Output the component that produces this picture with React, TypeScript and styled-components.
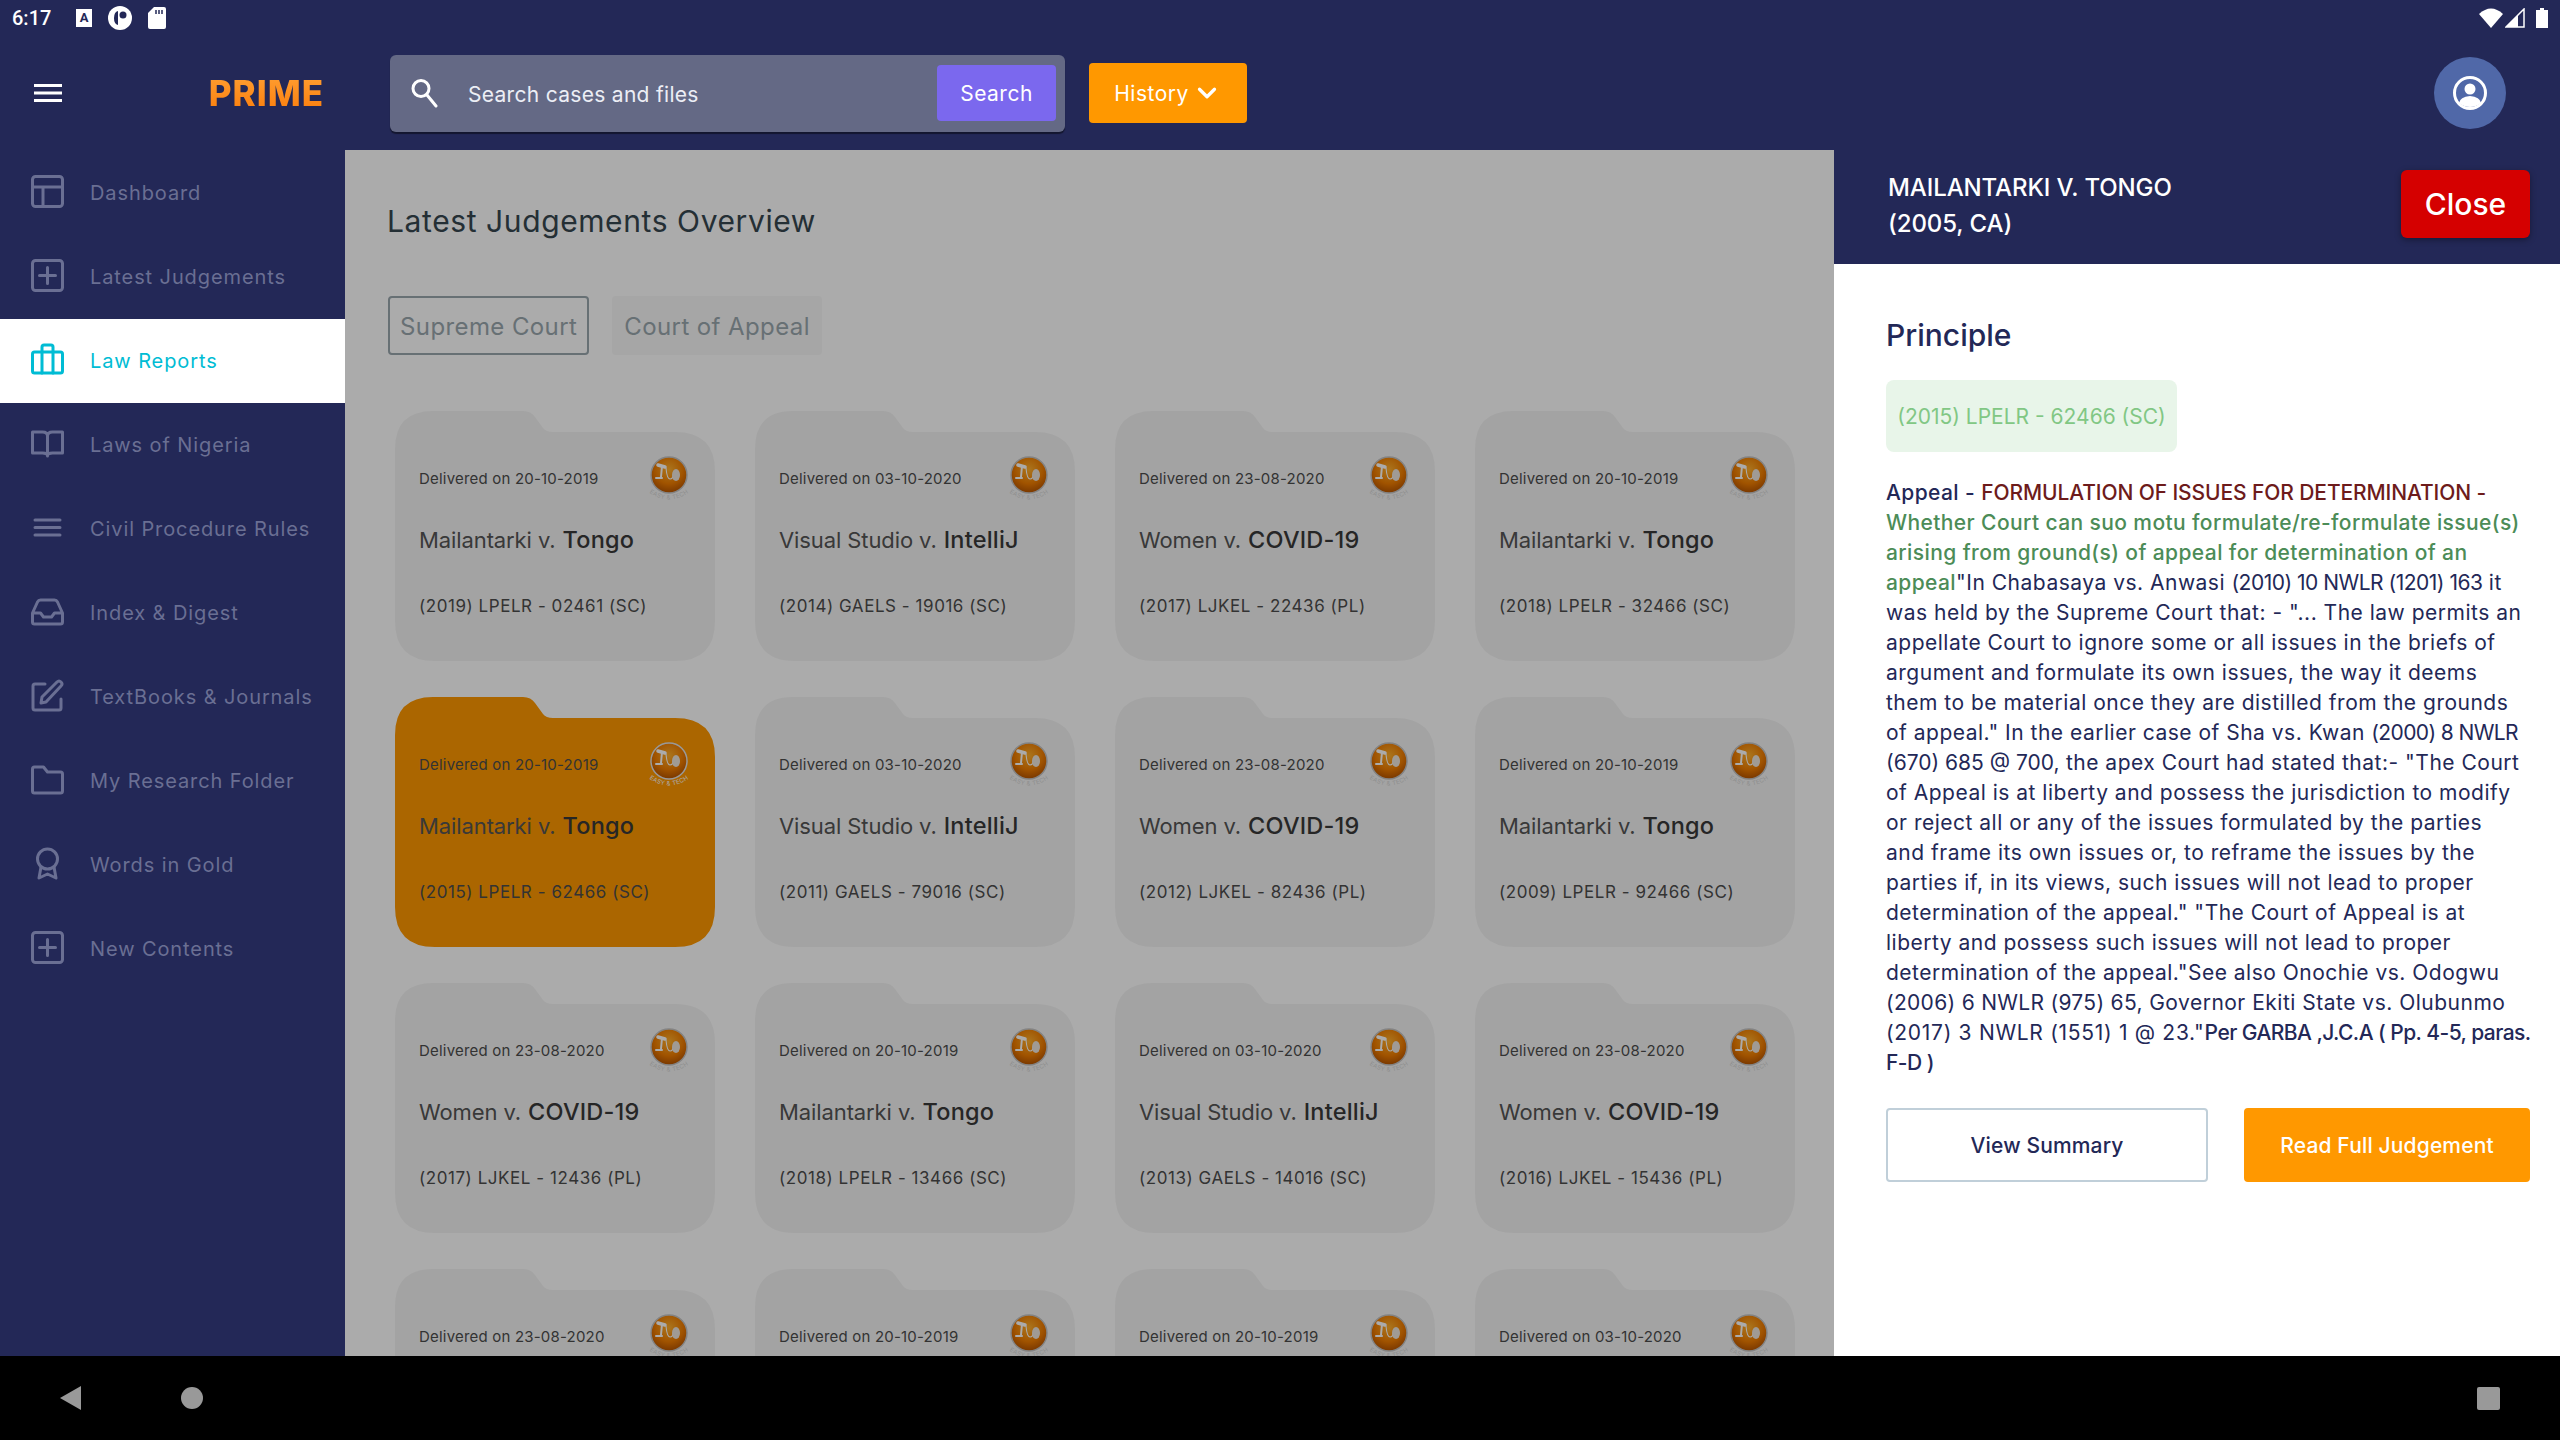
import * as React from "react";
import styled, { createGlobalStyle } from "styled-components";
import { ChevronDown } from "lucide-react";

const navy = "#232857";
const orange = "#ff9800";

const GlobalStyle = createGlobalStyle`
  html, body { margin: 0; padding: 0; background: #000; }
  * { box-sizing: border-box; }
  body { font-family: Inter, "Open Sans", sans-serif; }
`;

const Page = styled.div`
  width: 2560px;
  height: 1440px;
  display: flex;
  flex-direction: column;
  overflow: hidden;
  background: ${navy};
`;

/* status bar */
const StatusBar = styled.div`
  height: 36px;
  display: flex;
  align-items: center;
  padding: 0 12px;
  color: #fff;
`;

const Clock = styled.span`
  font-family: Roboto, sans-serif;
  font-size: 20px;
  font-weight: 500;
  width: 64px;
`;

const StatusLeft = styled.div`
  display: flex;
  align-items: center;
  gap: 16px;
`;

const KeyboardBox = styled.span`
  width: 16px;
  height: 18px;
  background: #fff;
  color: ${navy};
  font-family: Roboto, sans-serif;
  font-size: 13px;
  font-weight: 700;
  line-height: 18px;
  text-align: center;
`;

const StatusRight = styled.div`
  margin-left: auto;
  display: flex;
  align-items: center;
  gap: 2px;
`;

const BatteryIcon = styled.svg`
  margin-left: 9px;
`;

/* top bar */
const TopBar = styled.header`
  height: 114px;
  display: flex;
  align-items: center;
  padding-right: 54px;
`;

const BrandCell = styled.div`
  width: 390px;
  padding: 0 66px 0 34px;
  display: flex;
  align-items: center;
  justify-content: space-between;
`;

const Brand = styled.span`
  font-size: 35px;
  font-weight: 800;
  line-height: 40px;
  letter-spacing: 1px;
  background: linear-gradient(180deg, #ffa033, #fb7d0c);
  -webkit-background-clip: text;
  background-clip: text;
  color: transparent;
`;

const SearchBox = styled.div`
  width: 675px;
  height: 77px;
  border-radius: 6px;
  background: #646985;
  box-shadow: 0 2px 1px rgba(0, 0, 0, 0.45);
  display: flex;
  align-items: center;
  padding: 0 9px 0 20px;
  color: #fff;
`;

const SearchText = styled.span`
  margin-left: 28px;
  padding-top: 2px;
  flex: 1;
  font-size: 21px;
  letter-spacing: 0.3px;
  color: #eceef5;
`;

const SearchButton = styled.button`
  width: 119px;
  height: 56px;
  border: 0;
  border-radius: 4px;
  background: #7b68ee;
  color: #fff;
  font: 400 21px Inter, sans-serif;
  letter-spacing: 0.5px;
`;

const HistoryButton = styled.button`
  margin-left: 24px;
  width: 158px;
  height: 60px;
  border: 0;
  border-radius: 4px;
  background: ${orange};
  color: #fff;
  font: 400 21px Inter, sans-serif;
  letter-spacing: 0.5px;
  display: flex;
  align-items: center;
  justify-content: center;
  gap: 3px;
`;

const Avatar = styled.div`
  margin-left: auto;
  width: 72px;
  height: 72px;
  border-radius: 50%;
  background: #5068a8;
  display: flex;
  align-items: center;
  justify-content: center;
`;

/* main */
const Main = styled.div`
  flex: 1;
  min-height: 0;
  display: flex;
`;

const Sidebar = styled.nav`
  width: 345px;
  padding-top: 1px;
  flex: none;
`;

const NavRow = styled.div<{ $active?: boolean }>`
  height: 84px;
  display: flex;
  align-items: center;
  padding-left: 31px;
  gap: 26px;
  background: ${(p) => (p.$active ? "#fff" : "transparent")};
  color: ${(p) => (p.$active ? "#00bcd4" : "#6a6f93")};
`;

const NavGlyph = styled.svg`
  flex: none;
  margin-bottom: 3px;
`;

const NavLabel = styled.span`
  font-size: 20px;
  letter-spacing: 0.9px;
  white-space: nowrap;
`;

const Content = styled.section`
  position: relative;
  width: 1489px;
  flex: none;
  background: #fff;
  overflow: hidden;
  padding: 52px 0 0 42px;
`;

const Dim = styled.div`
  position: absolute;
  inset: 0;
  background: rgba(0, 0, 0, 0.33);
`;

const PageTitle = styled.h1`
  margin: 0;
  font-size: 30px;
  font-weight: 400;
  line-height: 38px;
  letter-spacing: 0.6px;
  color: #37474f;
`;

const Tabs = styled.div`
  margin: 56px 0 0 1px;
  display: flex;
  gap: 23px;
`;

const Tab = styled.div<{ $active?: boolean }>`
  height: 59px;
  padding: 2px 10px 0;
  display: flex;
  align-items: center;
  border-radius: 4px;
  font-size: 24px;
  letter-spacing: 0.4px;
  color: #9aa7ae;
  border: 2px solid ${(p) => (p.$active ? "#9aa7ae" : "transparent")};
  background: ${(p) => (p.$active ? "transparent" : "#f8f8f8")};
`;

const CardGrid = styled.div`
  margin: 56px 0 0 8px;
  display: grid;
  grid-template-columns: repeat(4, 320px);
  gap: 36px 40px;
`;

const Card = styled.article<{ $selected?: boolean }>`
  position: relative;
  width: 320px;
  height: 250px;
  padding: 48px 24px 0;
  background: ${(p) => (p.$selected ? orange : "#f4f4f4")};
  clip-path: path("M0 38Q0 0 38 0L128 0Q136 0 140 6L148 17Q151 21 158 21L280 21Q320 21 320 60L320 210Q320 250 280 250L40 250Q0 250 0 210Z");
`;

const CardDate = styled.div`
  height: 40px;
  line-height: 40px;
  font-size: 15px;
  letter-spacing: 0.2px;
  color: #4d4d4d;
`;

const CardTitle = styled.div`
  margin-top: 24px;
  line-height: 34px;
  font-size: 22px;
  letter-spacing: -0.1px;
  color: #555;
  white-space: nowrap;
  b {
    font-size: 23.5px;
    font-weight: 500;
    letter-spacing: 0.2px;
    color: #3a3a3a;
    margin-left: 1px;
  }
`;

const CardCite = styled.div`
  margin-top: 36px;
  line-height: 26px;
  font-size: 17px;
  letter-spacing: 0.55px;
  color: #4d4d4d;
  white-space: nowrap;
`;

const CoinWrap = styled.div`
  position: absolute;
  top: 44px;
  right: 21px;
`;

/* detail panel */
const Panel = styled.aside`
  flex: 1;
  background: #fff;
  min-width: 0;
`;

const PanelHead = styled.div`
  height: 114px;
  background: ${navy};
  display: flex;
  align-items: center;
  justify-content: space-between;
  padding: 0 30px 6px 54px;
  color: #fff;
`;

const CaseName = styled.div`
  padding-top: 3px;
  font-size: 24px;
  font-weight: 500;
  line-height: 36px;
  letter-spacing: -0.1px;
`;

const CloseButton = styled.button`
  width: 129px;
  height: 68px;
  border: 0;
  border-radius: 6px;
  background: #d50000;
  color: #fff;
  font: 500 30px Inter, sans-serif;
  box-shadow: 0 2px 6px rgba(0, 0, 0, 0.35);
`;

const PanelBody = styled.div`
  padding: 51px 30px 0 52px;
`;

const PanelTitle = styled.h2`
  margin: 0;
  font-size: 30px;
  font-weight: 500;
  line-height: 40px;
  color: ${navy};
`;

const CitePill = styled.div`
  margin-top: 25px;
  width: 291px;
  height: 72px;
  display: flex;
  align-items: center;
  justify-content: center;
  border-radius: 8px;
  background: #e8f5e9;
  color: #81c784;
  font-size: 21px;
  white-space: nowrap;
`;

const Principle = styled.p`
  margin: 26px 0 0;
  font-size: 21px;
  line-height: 30px;
  letter-spacing: 0.5px;
  color: ${navy};
  white-space: nowrap;
`;

const Subject = styled.span`
  font-weight: 500;
  letter-spacing: 0.4px;
`;

const Topic = styled.span`
  font-weight: 500;
  letter-spacing: -0.1px;
  color: #6d1b1b;
`;

const Issue = styled.span`
  font-weight: 500;
  letter-spacing: 0.4px;
  color: #4c8c57;
`;

const Reference = styled.span<{ $tight: number }>`
  letter-spacing: ${(p) => p.$tight}px;
`;

const Author = styled.span`
  font-weight: 500;
  letter-spacing: -0.55px;
`;

const Actions = styled.div`
  margin-top: 30px;
  display: flex;
  justify-content: space-between;
`;

const ActionButton = styled.button<{ $primary?: boolean }>`
  width: ${(p) => (p.$primary ? "286px" : "322px")};
  height: 74px;
  border-radius: 4px;
  border: 2px solid ${(p) => (p.$primary ? orange : "#c0cfd9")};
  background: ${(p) => (p.$primary ? orange : "#fff")};
  color: ${(p) => (p.$primary ? "#fff" : navy)};
  font: 500 21px Inter, sans-serif;
  letter-spacing: 0.15px;
`;

/* android nav */
const SystemNav = styled.footer`
  height: 84px;
  flex: none;
  background: #000;
  display: flex;
  align-items: center;
  padding: 0 60px;
  gap: 100px;
`;

const HomeDot = styled.span`
  width: 22px;
  height: 22px;
  border-radius: 50%;
  background: #999;
`;

const RecentsSquare = styled.span`
  margin-left: auto;
  width: 23px;
  height: 23px;
  border-radius: 2px;
  background: #999;
`;

const IconSvg = ({ children }: { children: React.ReactNode }) => (
  <NavGlyph width="33" height="33" viewBox="0 0 33 33" fill="none" stroke="currentColor" strokeWidth="3" strokeLinejoin="round" strokeLinecap="round">
    {children}
  </NavGlyph>
);

const navItems: { label: string; icon: React.ReactNode; active?: boolean }[] = [
  { label: "Dashboard", icon: <><rect x="1.5" y="1.5" width="30" height="30" rx="3" /><path d="M1.5 12h30M12 12v19.5" /></> },
  { label: "Latest Judgements", icon: <><rect x="1.5" y="1.5" width="30" height="30" rx="3" /><path d="M16.5 8.5v16M8.5 16.5h16" /></> },
  { label: "Law Reports", active: true, icon: <><rect x="1.5" y="9" width="30" height="21" rx="2" /><path d="M11 30V4q0-2 2-2h7q2 0 2 2v26" /></> },
  { label: "Laws of Nigeria", icon: <path d="M1.5 5h10q5 0 5 4v20q0-3-5-3h-10zM31.5 5h-10q-5 0-5 4v20q0-3 5-3h10z" /> },
  { label: "Civil Procedure Rules", icon: <path d="M4 9h25M4 16.5h25M4 24h25" /> },
  { label: "Index & Digest", icon: <path d="M1.5 18v9q0 2 2 2h26q2 0 2-2v-9l-5-11q-1-2-3-2H9.500q-2 0-3 2zM1.500 18h8l3 4h8l3-4h8" /> },
  { label: "TextBooks & Journals", icon: <path d="M14 5H4q-2 0-2 2v22q0 2 2 2h24q2 0 2-2V20M10 24l1-6L26 3q2-2 4 0t0 4L15 23z" /> },
  { label: "My Research Folder", icon: <path d="M1.500 6q0-2 2-2h9l4 5h13q2 0 2 2v17q0 2-2 2h-26q-2 0-2-2z" /> },
  { label: "Words in Gold", icon: <><circle cx="16.500" cy="12" r="10" /><path d="M10 20l-2 11 8.500-4 8.500 4-2-11" /></> },
  { label: "New Contents", icon: <><rect x="1.5" y="1.5" width="30" height="30" rx="3" /><path d="M16.5 8.500v16M8.500 16.500h16" /></> },
];

type CardData = { date: string; left: string; right: string; cite: string; selected?: boolean };

const mail = { left: "Mailantarki v.", right: "Tongo" };
const visual = { left: "Visual Studio v.", right: "IntelliJ" };
const women = { left: "Women v.", right: "COVID-19" };

const cards: CardData[] = [
  { ...mail, date: "20-10-2019", cite: "(2019) LPELR - 02461 (SC)" },
  { ...visual, date: "03-10-2020", cite: "(2014) GAELS - 19016 (SC)" },
  { ...women, date: "23-08-2020", cite: "(2017) LJKEL - 22436 (PL)" },
  { ...mail, date: "20-10-2019", cite: "(2018) LPELR - 32466 (SC)" },
  { ...mail, date: "20-10-2019", cite: "(2015) LPELR - 62466 (SC)", selected: true },
  { ...visual, date: "03-10-2020", cite: "(2011) GAELS - 79016 (SC)" },
  { ...women, date: "23-08-2020", cite: "(2012) LJKEL - 82436 (PL)" },
  { ...mail, date: "20-10-2019", cite: "(2009) LPELR - 92466 (SC)" },
  { ...women, date: "23-08-2020", cite: "(2017) LJKEL - 12436 (PL)" },
  { ...mail, date: "20-10-2019", cite: "(2018) LPELR - 13466 (SC)" },
  { ...visual, date: "03-10-2020", cite: "(2013) GAELS - 14016 (SC)" },
  { ...women, date: "23-08-2020", cite: "(2016) LJKEL - 15436 (PL)" },
];

// the last row is cut by the system bar, only its dates show
const partialDates = ["23-08-2020", "20-10-2019", "20-10-2019", "03-10-2020"];

function Coin({ selected, id }: { selected?: boolean; id: number }) {
  return (
    <svg width="50" height="52" viewBox="0 0 50 52">
      <defs>
        <radialGradient id="coinFill" cx="50%" cy="35%" r="65%">
          <stop offset="0%" stopColor="#ffb02e" />
          <stop offset="60%" stopColor="#f07d00" />
          <stop offset="100%" stopColor="#b55400" />
        </radialGradient>
        <path id={`coinArc${id}`} d="M3 36Q25 53 47 36" />
      </defs>
      <circle cx="25" cy="20" r="18" fill="url(#coinFill)" stroke={selected ? "#e4e4e4" : "#c4c4c4"} strokeWidth="1.500" />
      <g fill="none" stroke="#fff" strokeLinecap="round">
        <path d="M14 10l7 2" strokeWidth="3.500" />
        <path d="M18 11l-1 11" strokeWidth="2" />
        <path d="M12 23h6" strokeWidth="2" />
        <path d="M22 13q1 11 4 11t3-4" strokeWidth="1.100" />
      </g>
      <ellipse cx="32" cy="20" rx="4" ry="6" fill="#efe7df" />
      <text fontSize="6" fill={selected ? "#fff" : "#d4d4d4"} fontFamily="Inter, sans-serif" letterSpacing="0.3">
        <textPath href={`#coinArc${id}`} startOffset="50%" textAnchor="middle">EASY &amp; TECH</textPath>
      </text>
    </svg>
  );
}

export default function App() {
  return (
    <Page>
      <GlobalStyle />
      <StatusBar>
        <Clock>6:17</Clock>
        <StatusLeft>
          <KeyboardBox>A</KeyboardBox>
          <svg width="24" height="24" viewBox="0 0 24 24">
            <circle cx="12" cy="12" r="12" fill="#fff" />
            <path d="M10 5q-4 1-4 7t4 7z" fill={navy} />
            <circle cx="15" cy="9" r="3.500" fill={navy} />
          </svg>
          <svg width="18" height="22" viewBox="0 0 18 22">
            <path d="M6 0h10q2 0 2 2v18q0 2-2 2H2q-2 0-2-2V6z" fill="#fff" />
            <path d="M8 3v4M11 3v4M14 3v4" stroke={navy} strokeWidth="1.500" />
          </svg>
        </StatusLeft>
        <StatusRight>
          <svg width="24" height="20" viewBox="0 0 24 20"><path d="M0 6q12-11 24 0L12 20z" fill="#fff" /></svg>
          <svg width="20" height="20" viewBox="0 0 20 20"><path d="M1 19L19 1v18z" fill="none" stroke="#fff" strokeWidth="1.500" /><path d="M1 19L13 7v12z" fill="#fff" /></svg>
          <BatteryIcon width="12" height="20" viewBox="0 0 12 20"><path d="M0 2h4V0h4v2h4v18H0z" fill="#fff" /></BatteryIcon>
        </StatusRight>
      </StatusBar>
      <TopBar>
        <BrandCell>
          <svg width="28" height="20" viewBox="0 0 28 20"><path d="M0 2.500h28M0 10h28M0 17.500h28" stroke="#fff" strokeWidth="3" /></svg>
          <Brand>PRIME</Brand>
        </BrandCell>
        <SearchBox>
          <svg width="30" height="30" viewBox="0 0 30 30" fill="none" stroke="#fff" strokeWidth="3" strokeLinecap="round">
            <circle cx="11" cy="10.500" r="8" />
            <path d="M17 17l9 11" />
          </svg>
          <SearchText>Search cases and files</SearchText>
          <SearchButton>Search</SearchButton>
        </SearchBox>
        <HistoryButton>
          History <ChevronDown size={30} strokeWidth={2.6} />
        </HistoryButton>
        <Avatar>
          <svg width="36" height="36" viewBox="0 0 36 36">
            <circle cx="18" cy="18" r="15.500" fill="none" stroke="#fff" strokeWidth="3" />
            <circle cx="18" cy="14" r="5.500" fill="#fff" />
            <path d="M7 28q1-6 11-7 10 1 11 7-5 4-11 4t-11-4z" fill="#fff" />
          </svg>
        </Avatar>
      </TopBar>
      <Main>
        <Sidebar>
          {navItems.map((item) => (
            <NavRow key={item.label} $active={item.active}>
              <IconSvg>{item.icon}</IconSvg>
              <NavLabel>{item.label}</NavLabel>
            </NavRow>
          ))}
        </Sidebar>
        <Content>
          <PageTitle>Latest Judgements Overview</PageTitle>
          <Tabs>
            <Tab $active>Supreme Court</Tab>
            <Tab>Court of Appeal</Tab>
          </Tabs>
          <CardGrid>
            {cards.map((c, i) => (
              <Card key={i} $selected={c.selected}>
                <CardDate>Delivered on {c.date}</CardDate>
                <CoinWrap>
                  <Coin selected={c.selected} id={i} />
                </CoinWrap>
                <CardTitle>
                  {c.left} <b>{c.right}</b>
                </CardTitle>
                <CardCite>{c.cite}</CardCite>
              </Card>
            ))}
            {partialDates.map((d, i) => (
              <Card key={d + i}>
                <CardDate>Delivered on {d}</CardDate>
                <CoinWrap>
                  <Coin id={100 + i} />
                </CoinWrap>
              </Card>
            ))}
          </CardGrid>
          <Dim />
        </Content>
        <Panel>
          <PanelHead>
            <CaseName>
              MAILANTARKI V. TONGO
              <br />
              (2005, CA)
            </CaseName>
            <CloseButton>Close</CloseButton>
          </PanelHead>
          <PanelBody>
            <PanelTitle>Principle</PanelTitle>
            <CitePill>(2015) LPELR - 62466 (SC)</CitePill>
            <Principle>
              <Subject>Appeal - </Subject>
              <Topic>FORMULATION OF ISSUES FOR DETERMINATION - </Topic>
              <br />
              <Issue>
                Whether Court can suo motu formulate/re-formulate issue(s)
                <br />
                arising from ground(s) of appeal for determination of an
                <br />
                appeal
              </Issue>
              "In Chabasaya vs. Anwasi <Reference $tight={-0.5}>(2010) 10 NWLR (1201) 163</Reference> it
              <br />
              was held by the Supreme Court that: - "... The law permits an
              <br />
              appellate Court to ignore some or all issues in the briefs of
              <br />
              argument and formulate its own issues, the way it deems
              <br />
              them to be material once they are distilled from the grounds
              <br />
              of appeal." In the earlier case of Sha vs. Kwan <Reference $tight={-0.6}>(2000) 8 NWLR</Reference>
              <br />
              <Reference $tight={0}>(670) 685 @ 700,</Reference> the apex Court had stated that:- "The Court
              <br />
              of Appeal is at liberty and possess the jurisdiction to modify
              <br />
              or reject all or any of the issues formulated by the parties
              <br />
              and frame its own issues or, to reframe the issues by the
              <br />
              parties if, in its views, such issues will not lead to proper
              <br />
              determination of the appeal." "The Court of Appeal is at
              <br />
              liberty and possess such issues will not lead to proper
              <br />
              determination of the appeal."See also Onochie vs. Odogwu
              <br />
              <Reference $tight={0.3}>(2006) 6 NWLR (975) 65,</Reference> Governor Ekiti State vs. Olubunmo
              <br />
              <Reference $tight={0.7}>(2017) 3 NWLR (1551) 1 @ 23."</Reference>
              <Author>
                Per GARBA ,J.C.A ( Pp. 4-5, paras.
                <br />
                F-D )
              </Author>
            </Principle>
            <Actions>
              <ActionButton>View Summary</ActionButton>
              <ActionButton $primary>Read Full Judgement</ActionButton>
            </Actions>
          </PanelBody>
        </Panel>
      </Main>
      <SystemNav>
        <svg width="21" height="24" viewBox="0 0 21 24"><path d="M21 0v24L0 12z" fill="#999" /></svg>
        <HomeDot />
        <RecentsSquare />
      </SystemNav>
    </Page>
  );
}
